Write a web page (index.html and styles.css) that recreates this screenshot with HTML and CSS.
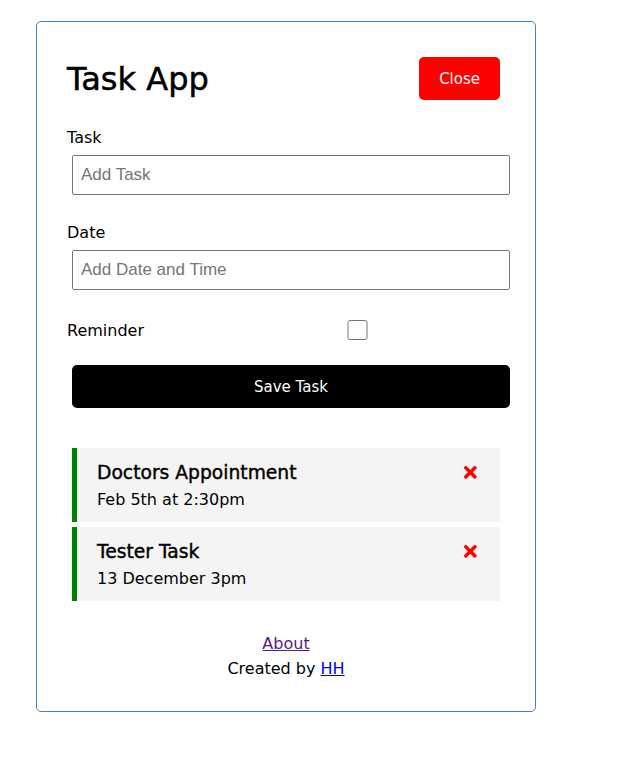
FILE: index.html
```html
<!DOCTYPE html>
<html lang="en">
<head>
<meta charset="utf-8">
<title>Task App</title>
<link rel="stylesheet" href="styles.css">
</head>
<body>
<div class="container">
  <header class="header">
    <h1>Task App</h1>
    <button class="btn btn-close">Close</button>
  </header>
  <form class="add-form">
    <div class="form-control">
      <label>Task</label>
      <input type="text" placeholder="Add Task">
    </div>
    <div class="form-control">
      <label>Date</label>
      <input type="text" placeholder="Add Date and Time">
    </div>
    <div class="form-control form-control-check">
      <label>Reminder</label>
      <input type="checkbox">
    </div>
    <input type="submit" value="Save Task" class="btn btn-block">
  </form>
  <div class="task reminder">
    <h3>Doctors Appointment <svg class="icon-x" viewBox="0 0 352 512"><path d="M242.72 256l100.07-100.07c12.28-12.28 12.28-32.19 0-44.48l-22.24-22.24c-12.28-12.28-32.19-12.28-44.48 0L176 189.28 75.93 89.21c-12.28-12.28-32.19-12.28-44.48 0L9.21 111.45c-12.28 12.28-12.28 32.19 0 44.48L109.28 256 9.21 356.07c-12.28 12.28-12.28 32.19 0 44.48l22.24 22.24c12.28 12.28 32.2 12.28 44.48 0L176 322.72l100.07 100.07c12.28 12.28 32.2 12.28 44.48 0l22.24-22.24c12.28-12.28 12.28-32.19 0-44.48L242.72 256z"/></svg></h3>
    <p>Feb 5th at 2:30pm</p>
  </div>
  <div class="task reminder">
    <h3>Tester Task <svg class="icon-x" viewBox="0 0 352 512"><path d="M242.72 256l100.07-100.07c12.28-12.28 12.28-32.19 0-44.48l-22.24-22.24c-12.28-12.28-32.19-12.28-44.48 0L176 189.28 75.93 89.21c-12.28-12.28-32.19-12.28-44.48 0L9.21 111.45c-12.28 12.28-12.28 32.19 0 44.48L109.28 256 9.21 356.07c-12.28 12.28-12.28 32.19 0 44.48l22.24 22.24c12.28 12.28 32.2 12.28 44.48 0L176 322.72l100.07 100.07c12.28 12.28 32.2 12.28 44.48 0l22.24-22.24c12.28-12.28 12.28-32.19 0-44.48L242.72 256z"/></svg></h3>
    <p>13 December 3pm</p>
  </div>
  <footer class="footer">
    <a href="#about" class="link-visited">About</a>
    <p>Created by <a href="#hh" class="link-new">HH</a></p>
  </footer>
</div>
</body>
</html>
```
FILE: styles.css
```css
* {
  box-sizing: border-box;
  margin: 0;
  padding: 0;
}

body {
  font-family: "DejaVu Sans", sans-serif;
  font-size: 16px;
  line-height: 25px;
  color: #000;
  background: #fff;
}

.container {
  width: 500px;
  margin: 21px 0 0 36px;
  min-height: 300px;
  overflow: auto;
  border: 1px solid steelblue;
  border-radius: 5px;
  padding: 30px;
}

.header {
  display: flex;
  justify-content: space-between;
  align-items: center;
  margin-bottom: 20px;
}

.header h1 {
  font-size: 32px;
  line-height: 50px;
  font-weight: normal;
  -webkit-text-stroke: 0.5px #000;
}

.btn {
  display: inline-block;
  background: #000;
  color: #fff;
  border: none;
  padding: 11px 20px 9px;
  margin: 5px;
  border-radius: 5px;
  cursor: pointer;
  font-size: 15px;
  font-family: inherit;
  line-height: 23px;
}

.btn-close {
  background: red;
}

.btn-block {
  display: block;
  width: 100%;
}

.add-form {
  margin-bottom: 40px;
}

.form-control {
  margin: 20px 0;
}

.form-control label {
  display: block;
}

.form-control input {
  width: 100%;
  height: 40px;
  margin: 5px;
  padding: 3px 7px;
  font-size: 17px;
  font-family: "Liberation Sans", Arial, sans-serif;
}

.form-control-check {
  display: flex;
  align-items: center;
  justify-content: space-between;
}

.form-control-check label {
  flex: 1;
}

.form-control-check input {
  flex: 2;
  height: 20px;
}

.task {
  background: #f4f4f4;
  margin: 5px;
  padding: 10px 20px;
  cursor: pointer;
}

.task.reminder {
  border-left: 5px solid green;
}

.task h3 {
  display: flex;
  align-items: center;
  justify-content: space-between;
  font-size: 18.72px;
  line-height: 29px;
  font-weight: normal;
  -webkit-text-stroke: 0.4px #000;
}

.icon-x {
  width: 1em;
  height: 1em;
  fill: red;
  stroke: none;
  flex-shrink: 0;
}

.footer {
  margin-top: 30px;
  text-align: center;
}

.link-visited {
  color: #551a8b;
}

.link-new {
  color: #0000ee;
}
```
